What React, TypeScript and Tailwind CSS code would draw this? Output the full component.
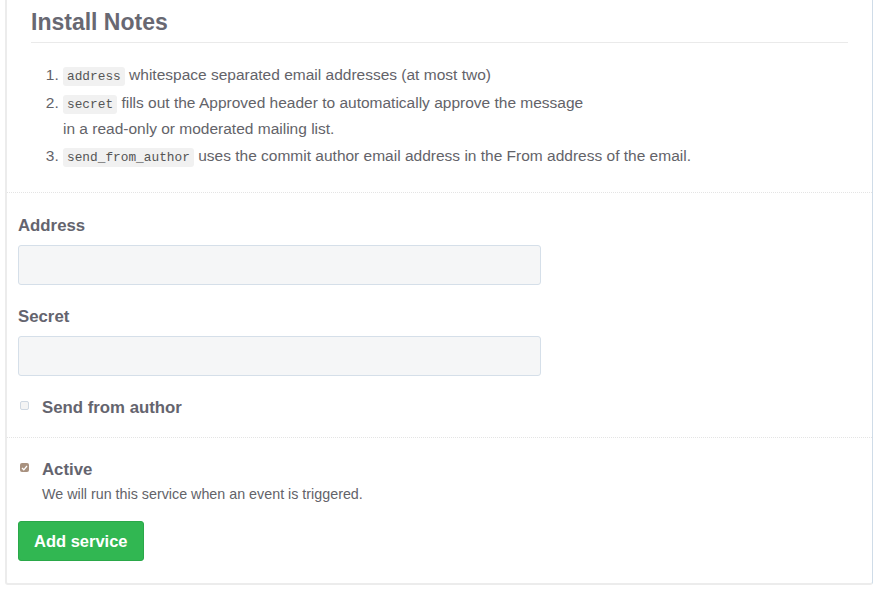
import React from "react";

const code = "font-['Liberation_Mono','DejaVu_Sans_Mono',monospace] text-[12.8px] leading-none bg-[#f1f1f1] rounded-[3px] px-[4px] py-[2px] text-[#555]";

export default function App() {
  return (
    <div className="w-[880px] h-[593px] bg-white font-['Liberation_Sans',Arial,sans-serif] text-[#636369] pl-[5px] pr-[7px]">
      <div className="border-l-2 border-l-[#ececec] border-r border-r-[#cfdce8] border-b-2 border-b-[#ececec] rounded-b-[3px]">
        <div className="px-[24px] pt-[7px] pb-[23px]">
          <h2 className="text-[23px] leading-[30px] font-bold text-[#686872] pb-[5px] border-b border-[#eaeaea]">Install Notes</h2>
          <ol className="list-decimal pl-[32px] mt-[19px] text-[15.5px] leading-[26px]">
            <li><span className={code}>address</span> whitespace separated email addresses (at most two)</li>
            <li className="mt-[2px]"><span className={code}>secret</span> fills out the Approved header to automatically approve the message<br />in a read-only or moderated mailing list.</li>
            <li className="mt-[1px]"><span className={code}>send_from_author</span> uses the commit author email address in the From address of the email.</li>
          </ol>
        </div>
        <div className="border-t border-dotted border-[#e4e4e4] px-[11px] pt-[23px] pb-[19px]">
          <label className="block text-[16.8px] leading-[20px] font-bold text-[#64646e]">Address</label>
          <input className="block mt-[9px] w-[523px] h-[40px] bg-[#f5f6f7] border border-[#d5dfe9] rounded-[3px]" />
          <label className="block mt-[22px] text-[16.8px] leading-[20px] font-bold text-[#64646e]">Secret</label>
          <input className="block mt-[9px] w-[523px] h-[40px] bg-[#f5f6f7] border border-[#d5dfe9] rounded-[3px]" />
          <div className="flex items-start mt-[22px]">
            <span className="mt-[3px] ml-[2px] w-[9px] h-[9px] border border-[#cfd8e2] rounded-[2px] bg-[#f4f4f4]" />
            <span className="ml-[13px] text-[16.8px] leading-[20px] font-bold text-[#64646e]">Send from author</span>
          </div>
        </div>
        <div className="border-t border-dotted border-[#e4e4e4] px-[11px] pt-[22px] pb-[22px]">
          <div className="flex items-start">
            <span className="mt-[3px] ml-[2px] w-[9px] h-[9px] rounded-[2px] bg-[#a8917f] flex items-center justify-center">
              <svg width="7" height="6" viewBox="0 0 7 6"><path d="M1 3l1.8 1.8L6 1" stroke="#fff" strokeWidth="1.3" fill="none" /></svg>
            </span>
            <div className="ml-[13px]">
              <div className="text-[16.8px] leading-[20px] font-bold text-[#64646e]">Active</div>
              <div className="text-[14.3px] leading-[18px] mt-[5px] text-[#636369]">We will run this service when an event is triggered.</div>
            </div>
          </div>
          <button className="mt-[18px] h-[40px] px-[15px] bg-[#31b752] border border-[#2aa849] rounded-[3px] text-white text-[16.5px] font-bold">Add service</button>
        </div>
      </div>
    </div>
  );
}
